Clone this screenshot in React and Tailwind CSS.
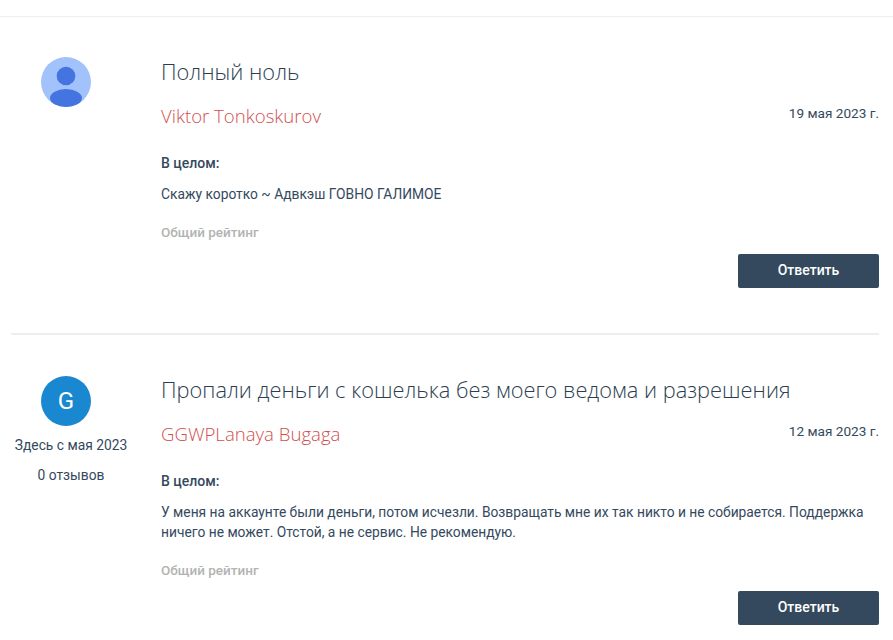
import React from 'react';

const reviews = [
  {
    id: 1,
    title: 'Полный ноль',
    author: 'Viktor Tonkoskurov',
    date: '19 мая 2023 г.',
    lines: ['Скажу коротко ~ Адвкэш ГОВНО ГАЛИМОЕ'],
    placeholder: true,
  },
  {
    id: 2,
    title: 'Пропали деньги с кошелька без моего ведома и разрешения',
    author: 'GGWPLanaya Bugaga',
    date: '12 мая 2023 г.',
    lines: [
      'У меня на аккаунте были деньги, потом исчезли. Возвращать мне их так никто и не собирается. Поддержка',
      'ничего не может. Отстой, а не сервис. Не рекомендую.',
    ],
    since: 'Здесь с мая 2023',
    count: '0 отзывов',
  },
];

function Avatar({ placeholder }) {
  if (placeholder) {
    return (
      <svg width="50" height="50" viewBox="0 0 50 50" className="block">
        <circle cx="25" cy="25" r="25" fill="#a1c2fa" />
        <circle cx="25" cy="19" r="9.3" fill="#4374e0" />
        <ellipse cx="25" cy="41" rx="16" ry="9" fill="#4374e0" />
      </svg>
    );
  }
  return (
    <div className="w-[50px] h-[50px] rounded-full bg-[#1a88d0] text-white flex items-center justify-center text-[24px] font-['Roboto',sans-serif]">
      G
    </div>
  );
}

function Review({ review }) {
  return (
    <div className="flex">
      {/* Left column */}
      <div className="w-[150px] shrink-0">
        <div className="pl-[41px]">
          <Avatar placeholder={review.placeholder} />
        </div>
        {review.since && (
          <div className="w-[142px] text-center text-[13.8px] leading-[20px] text-[#34495e]">
            <p className="mt-[9px]">{review.since}</p>
            <p className="mt-[10px]">{review.count}</p>
          </div>
        )}
      </div>

      {/* Body */}
      <div className="flex-1 ml-[11px] mr-[14px] min-w-0">
        <h3 className={`font-['Open_Sans',sans-serif] font-light text-[21.8px] leading-[30px] text-[#2c3e50] ${review.since ? '-mt-[1px]' : ''}`}>
          {review.title}
        </h3>
        <div className="flex justify-between items-center mt-[16px]">
          <span className="font-['Open_Sans',sans-serif] font-light text-[18.6px] leading-[26px] text-[#d04f4f]">
            {review.author}
          </span>
          <span className="text-[13.6px] leading-[20px] text-[#34495e] -mt-[7px]">{review.date}</span>
        </div>
        <p className="mt-[24px] text-[14px] leading-[20px] font-medium text-[#34495e]">В целом:</p>
        <div className="mt-[11px] text-[13.8px] leading-[20px] text-[#34495e]">
          {review.lines.map((line) => (
            <p key={line} className="whitespace-nowrap">{line}</p>
          ))}
        </div>
        <p className="mt-[18px] text-[13.5px] leading-[20px] font-medium text-[#b3b3b3]">Общий рейтинг</p>
        <div className={`flex justify-end ${review.since ? 'mt-[11px]' : 'mt-[12px]'}`}>
          <button className="w-[141px] h-[34px] pb-[2px] rounded-[2px] bg-[#34495e] text-white text-[14px] font-medium">
            Ответить
          </button>
        </div>
      </div>
    </div>
  );
}

export default function App() {
  return (
    <div className="w-[893px] h-[640px] overflow-hidden bg-white font-['Roboto',sans-serif]">
      <div className="pt-[16px]">
        <div className="border-t border-[#eeeeee]" />
      </div>
      <div className="pt-[40px]">
        <Review review={reviews[0]} />
      </div>
      <div className="mx-[11px] mr-[14px] mt-[45px] border-t-2 border-[#eeeeee]" />
      <div className="pt-[41px]">
        <Review review={reviews[1]} />
      </div>
    </div>
  );
}
